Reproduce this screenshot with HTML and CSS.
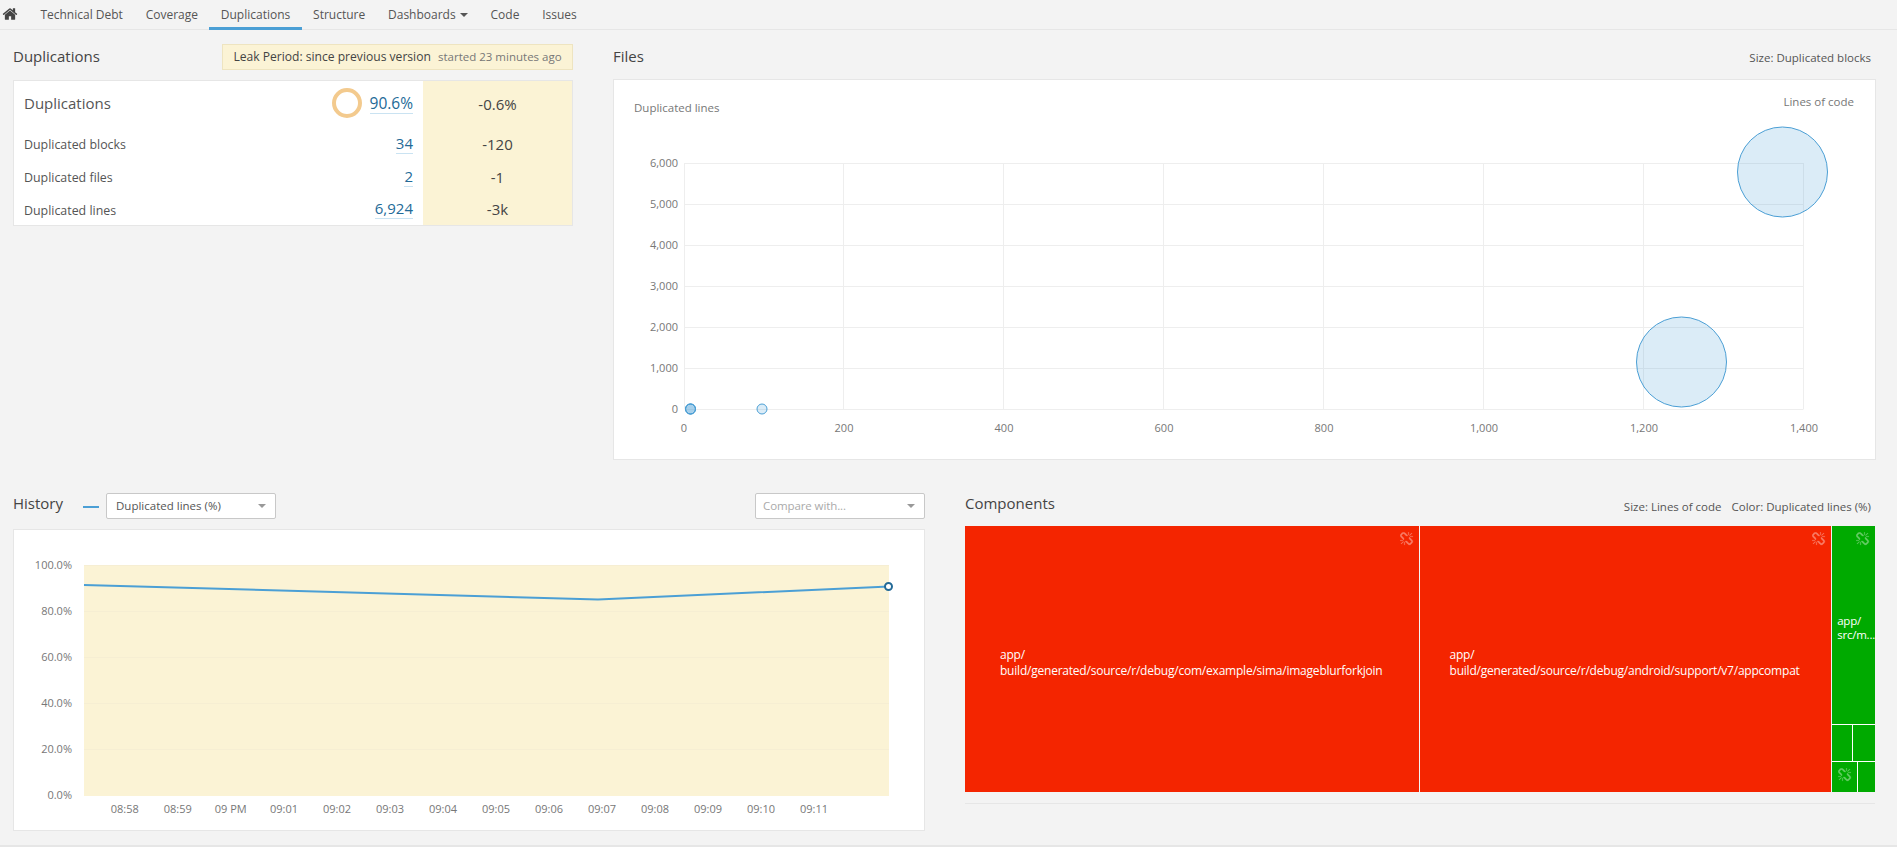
FILE: index.html
```html
<!DOCTYPE html>
<html lang="en">
<head>
<meta charset="utf-8">
<title>Duplications</title>
<link rel="stylesheet" href="styles.css">
</head>
<body>
<svg class="defs" width="0" height="0" aria-hidden="true">
  <symbol id="unlink" viewBox="0 0 1792 1792"><path d="M439 1271l-256 256q-11 9-23 9t-23-9q-9-10-9-23t9-23l256-256q10-9 23-9t23 9q9 10 9 23t-9 23zm169 41v320q0 14-9 23t-23 9-23-9-9-23v-320q0-14 9-23t23-9 23 9 9 23zm-224-224q0 14-9 23t-23 9h-320q-14 0-23-9t-9-23 9-23 23-9h320q14 0 23 9t9 23zm1264 128q0 120-85 203l-147 146q-83 83-203 83-121 0-204-85l-334-335q-21-21-42-56l239-18 273 274q27 27 68 27.5t68-26.5l147-146q28-28 28-67 0-40-28-68l-274-275 18-239q35 21 56 42l336 336q84 86 84 204zm-617-724l-239 18-273-274q-28-28-68-28-39 0-68 27l-147 146q-28 28-28 67 0 40 28 68l274 274-18 240q-35-21-56-42l-336-336q-84-86-84-204 0-120 85-203l147-146q83-83 203-83 121 0 204 85l334 335q21 21 42 56zm633 84q0 14-9 23t-23 9h-320q-14 0-23-9t-9-23 9-23 23-9h320q14 0 23 9t9 23zm-544-544v320q0 14-9 23t-23 9-23-9-9-23v-320q0-14 9-23t23-9 23 9 9 23zm407 151l-256 256q-11 9-23 9t-23-9q-9-10-9-23t9-23l256-256q10-9 23-9t23 9q9 10 9 23t-9 23z"/></symbol>
</svg>
<nav class="nav">
  <a class="home" href="#"><svg viewBox="0 0 1792 1792" width="16" height="16"><path d="M1472 992v480q0 26-19 45t-45 19h-384v-384h-256v384h-384q-26 0-45-19t-19-45v-480q0-1 .5-3t.5-3l575-474 575 474q1 2 1 6zm223-69l-62 74q-8 9-21 11h-3q-13 0-21-7l-692-577-692 577q-12 8-24 7-13-2-21-11l-62-74q-8-10-7-23.5t11-21.5l719-599q32-26 76-26t76 26l244 204v-195q0-14 9-23t23-9h192q14 0 23 9t9 23v408l219 182q10 8 11 21.5t-7 23.5z"/></svg></a>
  <a class="tab" href="#">Technical Debt</a>
  <a class="tab" href="#">Coverage</a>
  <a class="tab active" href="#">Duplications</a>
  <a class="tab" href="#">Structure</a>
  <a class="tab" href="#">Dashboards <span class="caret"></span></a>
  <a class="tab" href="#">Code</a>
  <a class="tab" href="#">Issues</a>
</nav>

<main class="page">
  <section class="row row-top">
    <div class="col-measures">
      <header class="head">
        <h2 class="title">Duplications</h2>
        <div class="leak">Leak Period: since previous version <span class="leak-note">started 23 minutes ago</span></div>
      </header>
      <div class="card measures">
        <div class="m-row m-main">
          <span class="m-label m-label-big">Duplications</span>
          <svg class="ring" width="32" height="32" viewBox="0 0 32 32"><circle cx="16" cy="15" r="13" fill="none" stroke="#f3ca8e" stroke-width="4"/></svg>
          <a class="m-val m-val-big" href="#">90.6%</a>
          <span class="m-leak">-0.6%</span>
        </div>
        <div class="m-row"><span class="m-label">Duplicated blocks</span><a class="m-val" href="#">34</a><span class="m-leak">-120</span></div>
        <div class="m-row"><span class="m-label">Duplicated files</span><a class="m-val" href="#">2</a><span class="m-leak">-1</span></div>
        <div class="m-row"><span class="m-label">Duplicated lines</span><a class="m-val" href="#">6,924</a><span class="m-leak">-3k</span></div>
      </div>
    </div>
    <div class="col-files">
      <header class="head">
        <h2 class="title">Files</h2>
        <span class="hint">Size: Duplicated blocks</span>
      </header>
      <div class="card chart-files">
        <svg class="chart" width="1261" height="379" viewBox="614 80 1261 379">
          <text class="axis-title" x="634" y="112">Duplicated lines</text>
          <text class="axis-title end" x="1854" y="106">Lines of code</text>
          <g class="grid">
            <path d="M684.500 163.500H1803.500M684.500 204.500H1803.500M684.500 245.500H1803.500M684.500 286.500H1803.500M684.500 327.500H1803.500M684.500 368.500H1803.500M684.500 409.500H1803.500"/>
            <path d="M684.500 163V409M843.500 163V409M1003.500 163V409M1163.500 163V409M1323.500 163V409M1483.500 163V409M1643.500 163V409M1803.500 163V409"/>
          </g>
          <g class="axis end">
            <text x="678" y="167">6,000</text><text x="678" y="208">5,000</text><text x="678" y="249">4,000</text><text x="678" y="290">3,000</text><text x="678" y="331">2,000</text><text x="678" y="372">1,000</text><text x="678" y="413">0</text>
          </g>
          <g class="axis mid">
            <text x="684" y="432">0</text><text x="844" y="432">200</text><text x="1004" y="432">400</text><text x="1164" y="432">600</text><text x="1324" y="432">800</text><text x="1484" y="432">1,000</text><text x="1644" y="432">1,200</text><text x="1804" y="432">1,400</text>
          </g>
          <g class="bubble">
            <circle cx="1782.500" cy="172" r="45"/>
            <circle cx="1681.500" cy="362" r="45"/>
            <circle cx="762" cy="409" r="5"/>
            <circle cx="690.500" cy="409" r="5"/>
            <circle cx="690.500" cy="409" r="5"/>
            <circle cx="690.500" cy="409" r="5"/>
          </g>
        </svg>
      </div>
    </div>
  </section>

  <section class="row row-bottom">
    <div class="col-history">
      <header class="head head-history">
        <h2 class="title">History</h2>
        <span class="legend"></span>
        <div class="select select-metric">Duplicated lines (%)<span class="arrow"></span></div>
        <div class="select select-compare">Compare with...<span class="arrow"></span></div>
      </header>
      <div class="card chart-history">
        <svg class="chart" width="910" height="300" viewBox="14 530 910 300">
          <rect class="leak-area" x="84" y="565" width="805" height="231"/>
          <path class="leak-grid" d="M84 565.500H889M84 611.500H889M84 657.500H889M84 703.500H889M84 749.500H889"/>
          <g class="axis end">
            <text x="72" y="569">100.0%</text><text x="72" y="615">80.0%</text><text x="72" y="661">60.0%</text><text x="72" y="707">40.0%</text><text x="72" y="753">20.0%</text><text x="72" y="799">0.0%</text>
          </g>
          <g class="axis mid">
            <text x="124.700" y="813">08:58</text><text x="177.700" y="813">08:59</text><text x="230.700" y="813">09 PM</text><text x="284" y="813">09:01</text><text x="337" y="813">09:02</text><text x="390" y="813">09:03</text><text x="443" y="813">09:04</text><text x="496" y="813">09:05</text><text x="549" y="813">09:06</text><text x="602" y="813">09:07</text><text x="655" y="813">09:08</text><text x="708" y="813">09:09</text><text x="761" y="813">09:10</text><text x="814" y="813">09:11</text>
          </g>
          <path class="line" d="M84 585L598 599.500L889 586.500"/>
          <circle class="dot" cx="888.500" cy="586.500" r="3.500"/>
        </svg>
      </div>
    </div>
    <div class="col-components">
      <header class="head head-components">
        <h2 class="title">Components</h2>
        <span class="hint">Size: Lines of code<span class="hint-gap">Color: Duplicated lines (%)</span></span>
      </header>
      <div class="treemap">
        <div class="cell red cell-a"><svg class="broken"><use href="#unlink"/></svg><span class="cell-text">app/<br>build/generated/source/r/debug/com/example/sima/imageblurforkjoin</span></div>
        <div class="cell red cell-b"><svg class="broken"><use href="#unlink"/></svg><span class="cell-text">app/<br>build/generated/source/r/debug/android/support/v7/appcompat</span></div>
        <div class="stack">
          <div class="cell green cell-c"><svg class="broken"><use href="#unlink"/></svg><span class="cell-text small">app/<br>src/m...</span></div>
          <div class="pair pair-1"><div class="cell green"></div><div class="cell green"></div></div>
          <div class="pair pair-2"><div class="cell green"><svg class="broken"><use href="#unlink"/></svg></div><div class="cell green"></div></div>
        </div>
      </div>
      <div class="rule"></div>
    </div>
  </section>
</main>
<footer class="foot"></footer>
</body>
</html>
```

FILE: styles.css
```css
* { box-sizing: border-box; }
html, body { margin: 0; height: 847px; overflow: hidden; }
body {
  background: #f3f3f3;
  color: #444;
  font-family: "Open Sans", "Noto Sans", sans-serif;
  font-size: 12px;
  display: flex;
  flex-direction: column;
}
a { color: inherit; text-decoration: none; }
.defs { position: absolute; }

.nav {
  height: 30px;
  flex: none;
  display: flex;
  align-items: stretch;
  border-bottom: 1px solid #e6e6e6;
  padding-left: 2px;
}
.home { width: 27px; padding-top: 6px; fill: #444; }
.tab {
  padding: 7px 11.400px 0;
  color: #555;
  line-height: 16px;
  margin-bottom: -1px;
  border-bottom: 3px solid transparent;
}
.tab.active { border-bottom-color: #4b9fd5; }
.caret {
  display: inline-block;
  width: 0;
  height: 0;
  margin-left: 1px;
  vertical-align: 2px;
  border-left: 4px solid transparent;
  border-right: 4px solid transparent;
  border-top: 4px solid #555;
}

.page { flex: 1; display: flex; flex-direction: column; }
.row { display: flex; }
.row-top { height: 463px; padding: 14px 21px 0 13px; justify-content: space-between; }
.row-top .title { padding-bottom: 2px; }
.row-bottom { padding: 0 22px 0 13px; justify-content: space-between; }
.row-bottom .title { padding-bottom: 6px; }

.title { margin: 0; font-size: 15px; line-height: 20px; font-weight: 400; color: #444; }
.head { display: flex; align-items: center; justify-content: space-between; }
.card { background: #fff; border: 1px solid #e6e6e6; }
.chart { display: block; }
.hint { color: #555; font-size: 11.500px; margin-right: 5px; }
.hint-gap { margin-left: 10px; }

.col-measures { width: 560px; }
.col-measures .head { height: 26px; margin-bottom: 10px; }
.leak {
  width: 351px;
  height: 26px;
  line-height: 24px;
  text-align: center;
  background: #fbf3d5;
  border: 1px solid #eee4c0;
  color: #444;
  font-size: 12.100px;
  white-space: nowrap;
}
.leak-note { color: #777; margin-left: 4px; font-size: 11.500px; }
.measures { height: 146px; }
.m-row { display: flex; align-items: center; height: 33px; padding-left: 10px; }
.m-main { height: 46px; }
.m-row:last-child { height: 32px; }
.m-label { flex: 1; font-size: 12.400px; color: #555; padding-top: 2px; }
.m-label-big { font-size: 15px; padding: 0 0 2px; }
.ring { margin-right: 7px; }
.m-val {
  color: #236a97;
  border-bottom: 1px solid #cae3f2;
  font-size: 15px;
  line-height: 19px;
  margin-right: 10px;
}
.m-val-big { font-size: 15.500px; }
.m-leak {
  width: 149px;
  align-self: stretch;
  background: #fbf3d5;
  display: flex;
  align-items: center;
  justify-content: center;
  font-size: 15px;
}

.col-files { width: 1263px; }
.col-files .head { height: 26px; margin-bottom: 9px; }
.chart-files { height: 381px; }

.axis { fill: #777; font-family: "Open Sans", "Noto Sans", sans-serif; font-size: 11px; }
.axis-title { fill: #777; font-family: "Open Sans", "Noto Sans", sans-serif; font-size: 11.500px; }
.end { text-anchor: end; }
.mid { text-anchor: middle; }
.grid path { fill: none; stroke: #eee; stroke-width: 1; }
.bubble circle { fill: rgba(75, 159, 213, 0.2); stroke: #4b9fd5; stroke-width: 1; }

.col-history { width: 912px; }
.head-history { height: 26px; margin-bottom: 10px; justify-content: flex-start; }
.legend { width: 16px; height: 2px; background: #4b9fd5; margin: 2px 7px 0 20px; }
.select {
  position: relative;
  width: 170px;
  height: 26px;
  line-height: 24px;
  padding-left: 9px;
  background: #fff;
  border: 1px solid #c8c8c8;
  border-radius: 2px;
  color: #555;
  font-size: 11.500px;
}
.select-compare { margin-left: auto; color: #aaa; padding-left: 7px; letter-spacing: -0.1px; }
.arrow {
  position: absolute;
  right: 9px;
  top: 10px;
  border-left: 4px solid transparent;
  border-right: 4px solid transparent;
  border-top: 4px solid #999;
}
.chart-history { height: 302px; }
.leak-area { fill: #fbf3d5; }
.leak-grid { fill: none; stroke: #f6eed3; }
.line { fill: none; stroke: #4b9fd5; stroke-width: 2; }
.dot { fill: #fff; stroke: #236a97; stroke-width: 2; }

.col-components { width: 910px; }
.head-components { height: 26px; margin-bottom: 7px; }
.head-components .hint { margin-right: 4px; }
.treemap { display: flex; height: 266px; gap: 1px; }
.cell { position: relative; display: flex; align-items: center; color: #fff; }
.red { background: #f42500; }
.green { background: #00aa00; }
.cell-a { width: 454px; padding: 8px 0 0 35px; }
.cell-b { width: 412px; padding: 8px 0 0 30px; }
.stack { flex: 1; display: flex; flex-direction: column; gap: 1px; background: #fff; }
.cell-c { height: 198px; padding: 6px 0 0 5px; }
.pair { display: flex; gap: 1px; }
.pair .cell { flex: 1; }
.pair-1 { height: 36px; }
.pair-1 .cell:first-child { flex: 0 0 20px; }
.pair-2 { flex: 1; }
.pair-2 .cell:first-child { flex: 0 0 25px; }
.cell-text { font-size: 12px; line-height: 16px; letter-spacing: -0.22px; white-space: nowrap; }
.cell-text.small { font-size: 11.500px; line-height: 14px; }
.broken {
  position: absolute;
  right: 5px;
  top: 6px;
  width: 14px;
  height: 14px;
  fill: #fff;
  stroke: #fff;
  stroke-width: 40px;
  opacity: 0.4;
}
.rule { height: 1px; margin-top: 11px; background: #e6e6e6; }
.foot { height: 2px; flex: none; background: #e6e6e6; margin-top: auto; }
```
